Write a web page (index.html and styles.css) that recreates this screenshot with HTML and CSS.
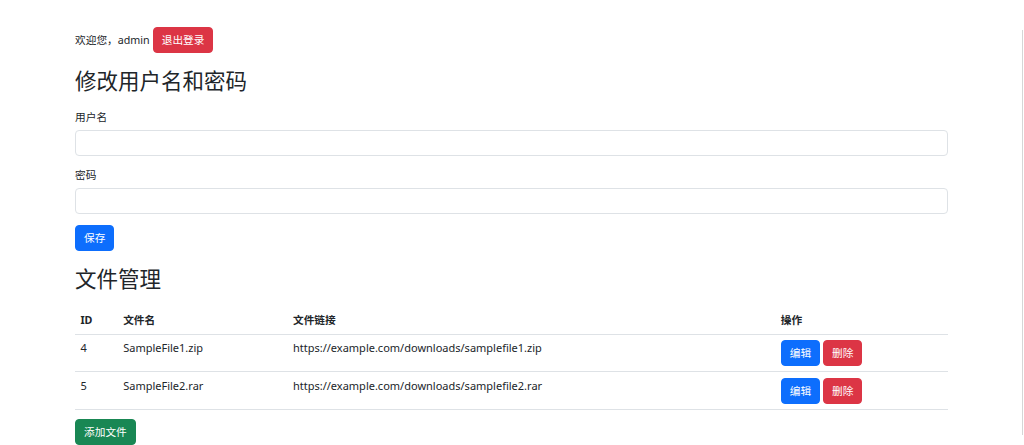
FILE: index.html
```html
<!DOCTYPE html>
<html lang="zh-CN">

<head>
    <meta charset="UTF-8">
    <meta name="viewport" content="width=device-width, initial-scale=1.0">
    <title>后台管理</title>
    <link rel="stylesheet" href="styles.css">
</head>

<body>
    <div class="container">

        <div class="welcome">
            <span>欢迎您，admin</span>
            <button class="btn btn-danger">退出登录</button>
        </div>

        <h2>修改用户名和密码</h2>
        <form class="account-form" onsubmit="return false">
            <div class="field">
                <label for="username">用户名</label>
                <input type="text" id="username" class="form-control">
            </div>
            <div class="field">
                <label for="password">密码</label>
                <input type="password" id="password" class="form-control">
            </div>
            <button class="btn btn-primary">保存</button>
        </form>

        <h2>文件管理</h2>
        <table class="file-table">
            <thead>
                <tr>
                    <th class="col-id">ID</th>
                    <th class="col-name">文件名</th>
                    <th class="col-link">文件链接</th>
                    <th>操作</th>
                </tr>
            </thead>
            <tbody>
                <tr>
                    <td>4</td>
                    <td>SampleFile1.zip</td>
                    <td>https://example.com/downloads/samplefile1.zip</td>
                    <td>
                        <button class="btn btn-primary">编辑</button>
                        <button class="btn btn-danger">删除</button>
                    </td>
                </tr>
                <tr>
                    <td>5</td>
                    <td>SampleFile2.rar</td>
                    <td>https://example.com/downloads/samplefile2.rar</td>
                    <td>
                        <button class="btn btn-primary">编辑</button>
                        <button class="btn btn-danger">删除</button>
                    </td>
                </tr>
            </tbody>
        </table>

        <button class="btn btn-success">添加文件</button>
    </div>
    <div class="scroll-edge"></div>
</body>

</html>
```

FILE: styles.css
```css
body {
    margin: 0;
    font-family: "Noto Sans", "Noto Sans CJK SC", sans-serif;
    font-size: 10.7px;
    line-height: 1.5;
    color: #212529;
    background: #fff;
}

.container {
    width: 873px;
    margin: 0 auto 0 75px;
    padding-top: 27px;
}

.welcome {
    display: flex;
    align-items: center;
    gap: 3px;
}

h2 {
    font-size: 21.5px;
    font-weight: 400;
    line-height: 1.2;
    margin: 15px 0 15px;
}

.field {
    margin-bottom: 10.7px;
}

.field label {
    display: block;
    margin-bottom: 5.4px;
}

.form-control {
    display: block;
    box-sizing: border-box;
    width: 100%;
    height: 26px;
    padding: 4px 8px;
    font: inherit;
    border: 1px solid #dee2e6;
    border-radius: 4px;
    background: #fff;
}

.btn {
    font-family: inherit;
    font-size: 10.7px;
    line-height: 16px;
    padding: 4px 8px;
    border: 1px solid transparent;
    border-radius: 4px;
    color: #fff;
    cursor: pointer;
}

.btn-primary {
    background: #0d6efd;
    border-color: #0d6efd;
}

.btn-danger {
    background: #dc3545;
    border-color: #dc3545;
}

.btn-success {
    background: #198754;
    border-color: #198754;
}

.account-form {
    margin-bottom: 13px;
}

.file-table {
    width: 100%;
    border-collapse: collapse;
    margin-top: 12px;
    margin-bottom: 9px;
}

.file-table th,
.file-table td {
    text-align: left;
    padding: 5.4px;
    border-bottom: 1px solid #dee2e6;
    vertical-align: top;
}

.file-table td {
    font-size: 11px;
    line-height: 16px;
}

.file-table th {
    font-weight: bold;
}

.col-id {
    width: 32px;
}

.col-name {
    width: 159px;
}

.col-link {
    width: 477px;
}

.scroll-edge {
    position: fixed;
    right: 1px;
    top: 30px;
    bottom: 10px;
    width: 1px;
    background: #d6d6d6;
}
```
